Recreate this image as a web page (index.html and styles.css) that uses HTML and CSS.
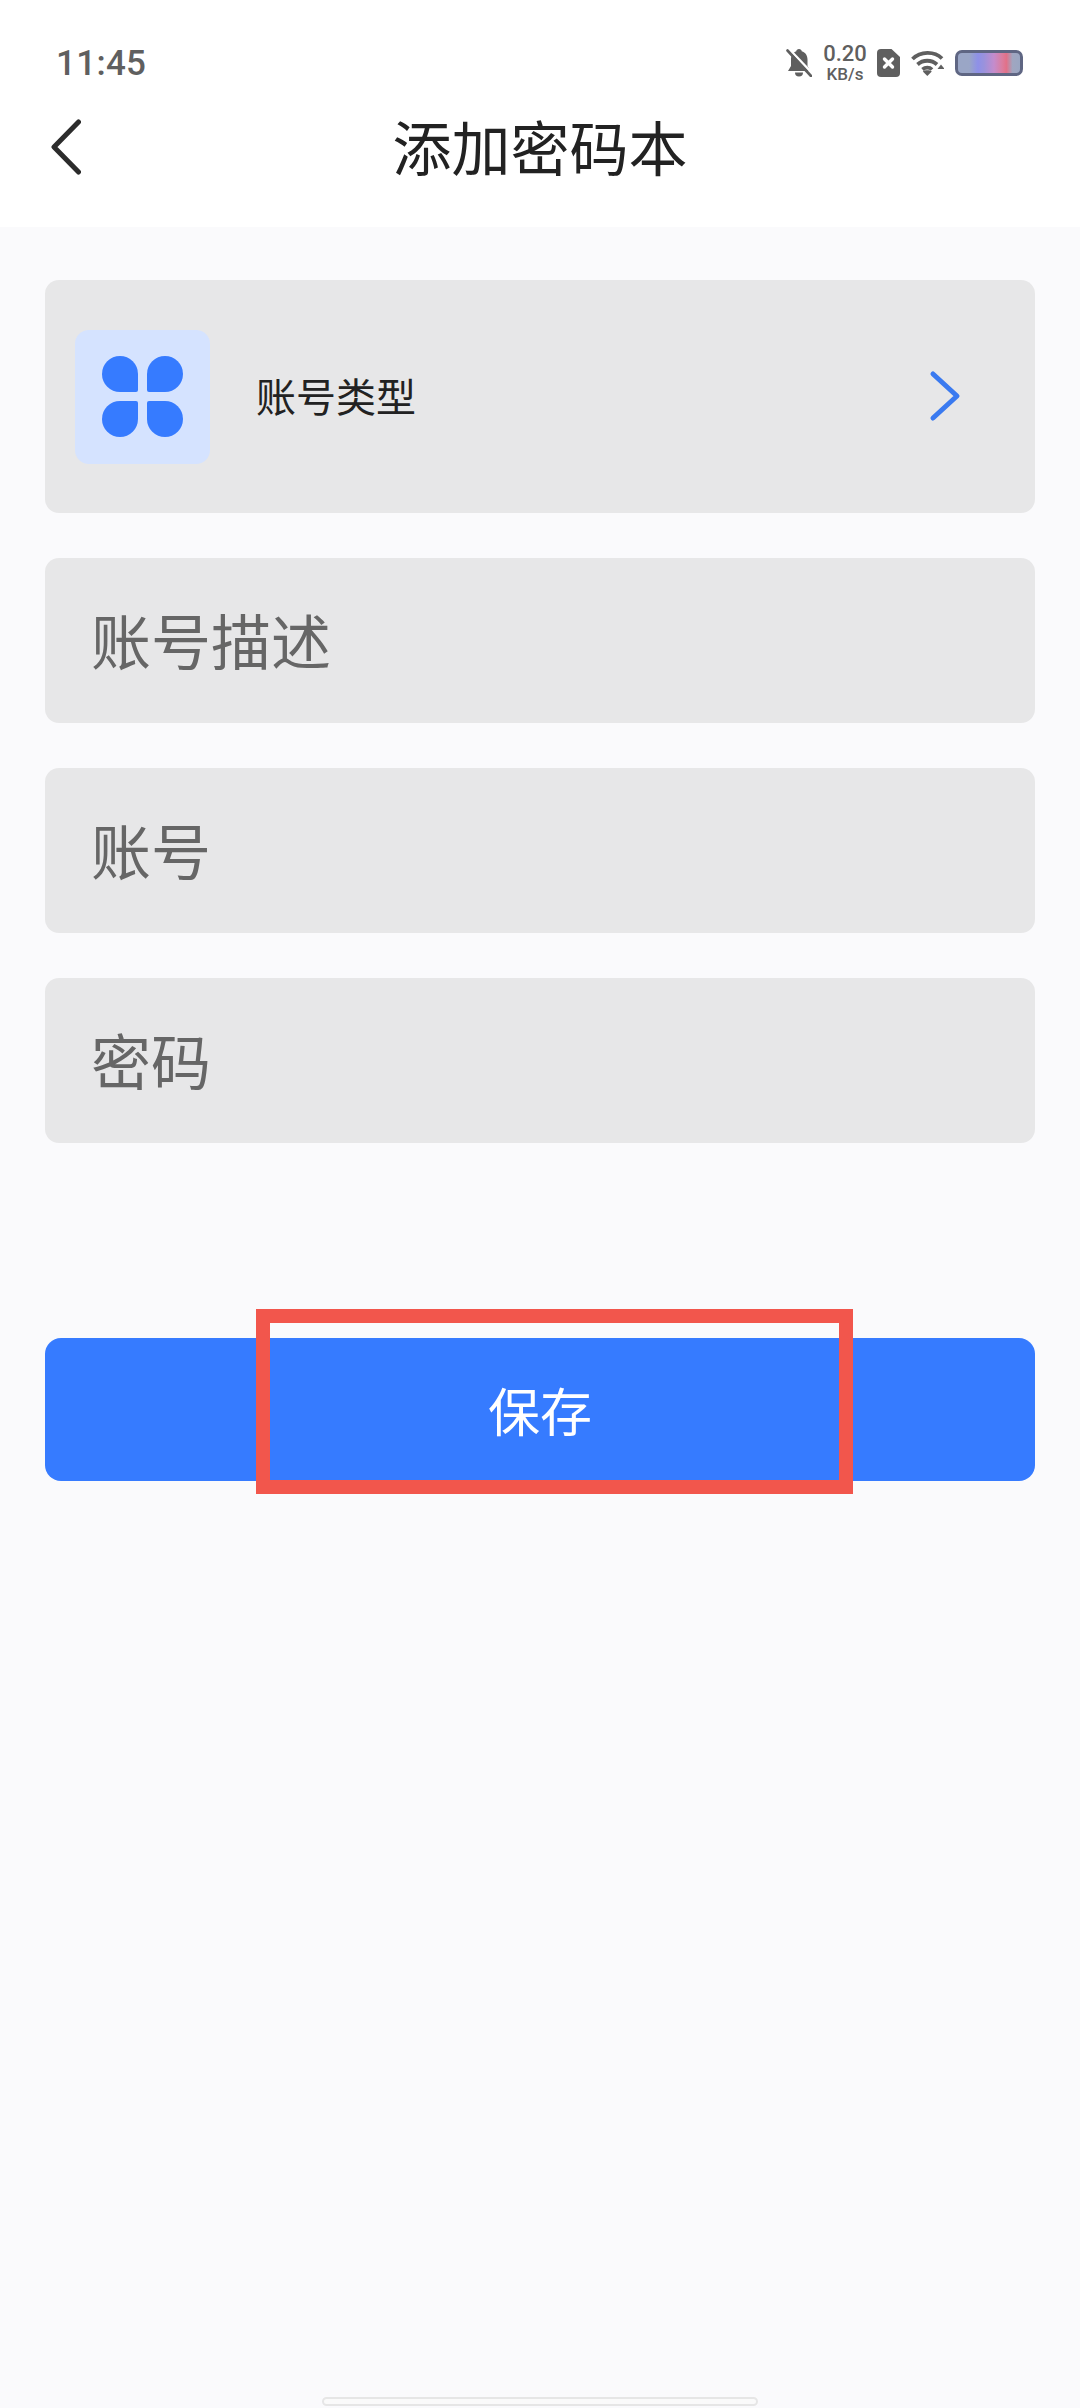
FILE: index.html
```html
<!DOCTYPE html>
<html lang="zh-CN">
<head>
  <meta charset="UTF-8" />
  <meta name="viewport" content="width=device-width, initial-scale=1" />
  <title>添加密码本</title>
  <link rel="stylesheet" href="styles.css">
</head>
<body>
  <header class="header">
    <div class="status">
      <div class="time">11:45</div>
      <div class="status-icons">
        <svg class="ic-bell" viewBox="0 0 26 28">
          <path d="M13 0c1.600 0 2.600 1 2.700 2.200 3.800 1 5.800 4.300 5.800 8.300v6.500l3 5H2l3-5v-6.500c0-4 2-7.300 5.300-8.300C10.400 1 11.400 0 13 0z" fill="#5f5f5f"/>
          <path d="M9 23.500h8a4 4 0 0 1-8 0z" fill="#5f5f5f"/>
          <path d="M3 0L27 25" stroke="#ffffff" stroke-width="2.500"/>
          <path d="M1.500 1.500L25 27" stroke="#5f5f5f" stroke-width="2.600" stroke-linecap="round"/>
        </svg>
        <div class="speed">
          <div class="speed-num">0.20</div>
          <div class="speed-unit">KB/s</div>
        </div>
        <svg class="ic-sim" viewBox="0 0 23 28">
          <path d="M4 0h10.500L23 8v16a4 4 0 0 1-4 4H4a4 4 0 0 1-4-4V4a4 4 0 0 1 4-4z" fill="#5f5f5f"/>
          <path d="M7.500 10l8 8M15.500 10l-8 8" stroke="#ffffff" stroke-width="3.400" stroke-linecap="round"/>
        </svg>
        <svg class="ic-wifi" viewBox="0 0 33 26" fill="none" stroke="#5f5f5f" stroke-width="3.800">
          <path d="M1.500 9C9.500 1 23.500 1 31 8.500"/>
          <path d="M6.500 14.500c5.500-5 14-5 19.500 0"/>
          <path d="M11.500 19.500c2.800-2.500 7-2.500 9.500 0"/>
          <path d="M16.300 26l-4.500-4.500c2-1.600 7-1.600 9 0z" fill="#5f5f5f" stroke="none"/>
          <path d="M30 14.500l3.500 4.500h-7z" fill="#5f5f5f" stroke="none"/>
        </svg>
        <div class="battery"></div>
      </div>
    </div>
    <div class="nav">
      <svg class="ic-back" viewBox="0 0 30 56" fill="none">
        <path d="M27.500 3L3 28l24.500 25" stroke="#2c2c2c" stroke-width="5" stroke-linecap="round" stroke-linejoin="round"/>
      </svg>
      <h1 class="title">添加密码本</h1>
    </div>
  </header>

  <main class="form">
    <div class="field field-type">
      <div class="type-icon">
        <svg viewBox="0 0 81 81" width="81" height="81">
          <path d="M18 0a18 18 0 0 1 18 18v16a2 2 0 0 1-2 2H18a18 18 0 0 1 0-36z" fill="#367bff"/>
          <path d="M63 0a18 18 0 0 1 0 36H47a2 2 0 0 1-2-2V18A18 18 0 0 1 63 0z" fill="#367bff"/>
          <path d="M18 45h16a2 2 0 0 1 2 2v16a18 18 0 1 1-18-18z" fill="#367bff"/>
          <path d="M47 45h16a18 18 0 1 1-18 18V47a2 2 0 0 1 2-2z" fill="#367bff"/>
        </svg>
      </div>
      <div class="type-label">账号类型</div>
      <svg class="ic-next" viewBox="0 0 32 52" fill="none">
        <path d="M4 4l24 22L4 48" stroke="#3a7af0" stroke-width="5" stroke-linecap="round" stroke-linejoin="round"/>
      </svg>
    </div>
    <div class="field field-input">账号描述</div>
    <div class="field field-input">账号</div>
    <div class="field field-input">密码</div>

    <div class="save">
      保存
      <div class="mark"></div>
    </div>
  </main>

  <div class="home-bar"></div>
</body>
</html>
```

FILE: styles.css
```css
html, body {
  margin: 0;
  padding: 0;
}
body {
  position: relative;
  width: 1080px;
  height: 2408px;
  overflow: hidden;
  background: #fafafc;
  font-family: "Noto Sans CJK SC", "Noto Sans", sans-serif;
}
.header {
  height: 227px;
  background: #fff;
}
.status {
  display: flex;
  justify-content: space-between;
  align-items: center;
  box-sizing: border-box;
  height: 90px;
  padding: 36px 57px 0 56px;
}
.time {
  font-family: Roboto, sans-serif;
  font-size: 35px;
  font-weight: 500;
  color: #5f5f5f;
  letter-spacing: 0.3px;
}
.status-icons {
  display: flex;
  align-items: center;
}
.ic-bell {
  width: 26px;
  height: 28px;
  margin-right: 10px;
}
.speed {
  width: 46px;
  margin-right: 9px;
  text-align: center;
  font-family: Roboto, sans-serif;
  color: #5f5f5f;
  font-weight: 500;
}
.speed-num {
  font-size: 22px;
  line-height: 22px;
}
.speed-unit {
  font-size: 17px;
  line-height: 18px;
}
.ic-sim {
  width: 23px;
  height: 28px;
  margin-right: 11px;
}
.ic-wifi {
  width: 33px;
  height: 26px;
  margin-right: 11px;
}
.battery {
  box-sizing: border-box;
  width: 68px;
  height: 26px;
  border: 3px solid #5f6683;
  border-radius: 7px;
  background: linear-gradient(90deg, #9aa6c6 0%, #9aa6c6 18%, #8e90e8 32%, #9a92dc 42%, #c48ccc 58%, #dc7c9c 72%, #e27088 78%, #a0a6c0 88%, #9aa6c2 100%);
}
.nav {
  position: relative;
  display: flex;
  align-items: center;
  justify-content: center;
  height: 118px;
}
.ic-back {
  position: absolute;
  left: 51px;
  top: 29px;
  width: 30px;
  height: 56px;
}
.title {
  margin: 0 0 6px;
  font-size: 59px;
  font-weight: 400;
  color: #222;
  line-height: 112px;
}
.form {
  display: flex;
  flex-direction: column;
  gap: 45px;
  padding: 53px 45px 0 45px;
  width: 990px;
}
.field {
  display: flex;
  align-items: center;
  background: #e7e7e8;
  border-radius: 14px;
}
.field-type {
  height: 233px;
  padding: 0 74px 0 30px;
}
.type-icon {
  display: flex;
  align-items: center;
  justify-content: center;
  width: 135px;
  height: 134px;
  background: #d5e3ff;
  border-radius: 14px;
}
.type-label {
  flex: 1;
  margin: 0 0 3px 46px;
  font-size: 40px;
  color: #222;
}
.ic-next {
  width: 32px;
  height: 52px;
  margin-bottom: 2px;
}
.field-input {
  box-sizing: border-box;
  height: 165px;
  padding: 0 0 5px 46px;
  font-size: 60px;
  color: #666;
}
.save {
  position: relative;
  display: flex;
  align-items: center;
  justify-content: center;
  height: 143px;
  margin-top: 150px;
  background: #367bff;
  border-radius: 16px;
  font-size: 52px;
  color: #fff;
}
/* red annotation box drawn over the button */
.mark {
  position: absolute;
  left: 211px;
  top: -29px;
  box-sizing: border-box;
  width: 597px;
  height: 185px;
  border: 14px solid #f2564c;
}
.home-bar {
  position: absolute;
  left: 322px;
  top: 2397px;
  box-sizing: border-box;
  width: 436px;
  height: 9px;
  background: #fafafa;
  border: 2px solid #e6e6e6;
  border-radius: 5px;
}
```
